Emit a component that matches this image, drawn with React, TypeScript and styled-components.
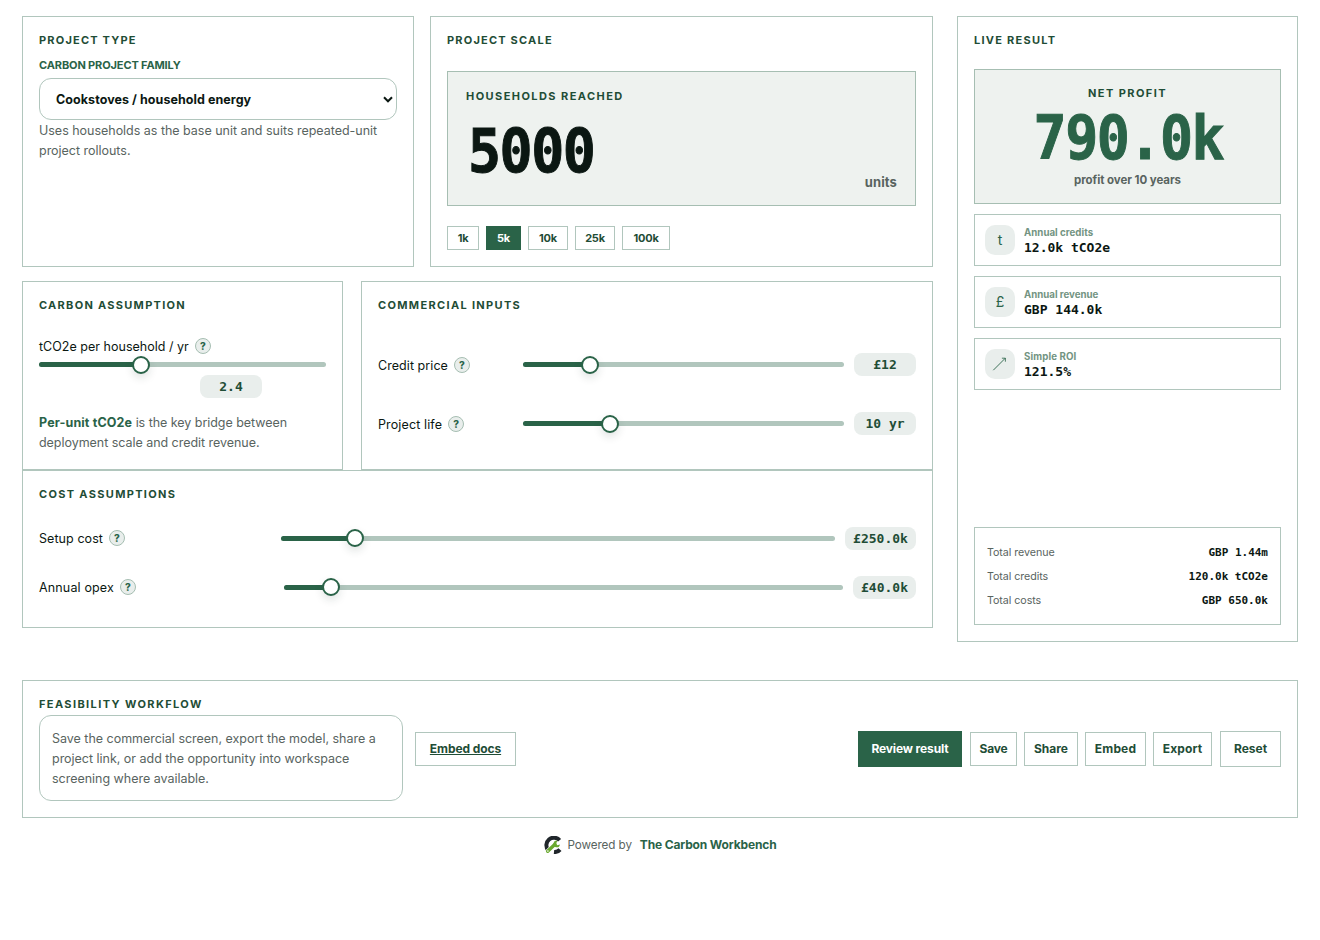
import React from 'react';
import styled, { createGlobalStyle, css } from 'styled-components';

const c = {
  ink: '#0b1712',
  green: '#2a6348',
  deep: '#1f4d36',
  muted: '#59645f',
  line: '#b1c6bd',
  lineStrong: '#a6beb2',
  tint: '#eef2ef',
  pill: '#e9eeec',
  sage: '#739482',
};

const mono = '"DejaVu Sans Mono", "Liberation Mono", monospace';

const GlobalStyle = createGlobalStyle`
  * { box-sizing: border-box; }
  body {
    margin: 0;
    background: #fff;
    color: ${c.ink};
    font-family: Inter, "Liberation Sans", sans-serif;
    font-size: 12.5px;
    line-height: 20px;
  }
  p { margin: 0; }
  button { font-family: inherit; }
`;

type Spaced = { $ls?: number };
const spacing = css<Spaced>`
  letter-spacing: ${({ $ls = 0 }) => $ls}px;
  white-space: nowrap;
`;

const Page = styled.main`
  display: flex;
  flex-direction: column;
  padding: 16px 22px;
`;

const Workbench = styled.div`
  display: grid;
  grid-template-columns: 911px 341px;
  column-gap: 24px;
  align-items: start;
`;

const Inputs = styled.div`
  display: flex;
  flex-direction: column;
`;

const TopRow = styled.div`
  display: grid;
  grid-template-columns: 392px 503px;
  gap: 16px;
  height: 251px;
  margin-bottom: 14px;
`;

const MiddleRow = styled.div`
  display: grid;
  grid-template-columns: 321px 572px;
  gap: 18px;
  height: 189px;
`;

const Card = styled.section<{ $height?: number }>`
  display: flex;
  flex-direction: column;
  border: 1px solid ${c.line};
  padding: 16px;
  min-width: 0;
  height: ${({ $height }) => ($height ? `${$height}px` : 'auto')};
`;

const Eyebrow = styled.h2<Spaced>`
  margin: 0;
  font-size: 11px;
  font-weight: 700;
  line-height: 14px;
  color: ${c.deep};
  ${spacing}
`;

const FieldLabel = styled.label`
  margin-top: 11px;
  font-size: 11px;
  font-weight: 700;
  line-height: 14px;
  letter-spacing: -0.13px;
  color: ${c.green};
`;

const SelectBox = styled.div`
  display: flex;
  align-items: center;
  justify-content: space-between;
  height: 42px;
  margin-top: 6px;
  padding: 1px 3px 0 16px;
  border: 1px solid ${c.line};
  border-radius: 12px;
  font-weight: 700;
  letter-spacing: 0.06px;
`;

const Copy = styled.p<Spaced>`
  padding-top: 1px;
  color: ${c.muted};
  ${spacing}
`;

const Strong = styled.strong`
  font-weight: 700;
  letter-spacing: 0.14px;
  color: ${c.green};
`;

const ScaleBox = styled.div`
  display: flex;
  flex-direction: column;
  height: 135px;
  margin-top: 24px;
  padding: 17px 18px 0;
  background: ${c.tint};
  border: 1px solid ${c.lineStrong};
`;

const BigNumber = styled.div<{ $color: string }>`
  font-family: ${mono};
  font-size: 61px;
  font-weight: 700;
  line-height: 60px;
  letter-spacing: -1.6px;
  white-space: nowrap;
  color: ${({ $color }) => $color};
  -webkit-text-stroke: 1px ${({ $color }) => $color};
  transform: scaleX(0.9);
`;

const ScaleNumber = styled(BigNumber)`
  align-self: flex-start;
  margin: 18px 0 0 2px;
  transform-origin: left;
`;

const Units = styled.span`
  align-self: flex-end;
  margin-top: -9px;
  font-size: 13px;
  font-weight: 700;
  letter-spacing: 0.1px;
  color: ${c.muted};
`;

const Chips = styled.div`
  display: flex;
  gap: 7px;
  margin-top: 20px;
`;

const Chip = styled.button<{ $width: number; $active?: boolean }>`
  width: ${({ $width }) => $width}px;
  height: 24px;
  padding: 0;
  font-size: 11px;
  font-weight: 700;
  letter-spacing: -0.2px;
  color: ${({ $active }) => ($active ? '#fff' : c.deep)};
  background: ${({ $active }) => ($active ? c.green : '#fff')};
  border: 1px solid ${({ $active }) => ($active ? c.green : c.line)};
`;

const ControlLabel = styled.div<Spaced & { $width?: number }>`
  display: flex;
  align-items: center;
  flex: none;
  gap: 6px;
  width: ${({ $width }) => ($width ? `${$width}px` : 'auto')};
  ${spacing}
`;

const LabelText = styled.span`
  padding-top: 1px;
  margin-bottom: -1px;
`;

const Help = styled.span`
  display: flex;
  align-items: center;
  justify-content: center;
  width: 16px;
  height: 16px;
  border: 1px solid ${c.lineStrong};
  border-radius: 50%;
  background: ${c.pill};
  font-size: 10px;
  font-weight: 800;
  line-height: 1;
  letter-spacing: 0;
  color: ${c.green};
`;

const Track = styled.div`
  position: relative;
  flex: 1;
  height: 5px;
  min-height: 5px;
  border-radius: 3px;
  background: ${c.line};
`;

const Fill = styled.div`
  height: 5px;
  border-radius: 3px 0 0 3px;
  background: ${c.green};
`;

const Thumb = styled.div<{ $raised?: boolean }>`
  position: absolute;
  top: ${({ $raised }) => ($raised ? -7 : -6)}px;
  width: 18px;
  height: 18px;
  margin-left: -9px;
  border: 2px solid ${c.green};
  border-radius: 50%;
  background: #fff;
  box-shadow: 0 4px 8px rgba(20, 50, 36, 0.13);
`;

const Pill = styled.output<{ $width: number }>`
  flex: none;
  width: ${({ $width }) => $width}px;
  height: 23px;
  border-radius: 8px;
  background: ${c.pill};
  font-family: ${mono};
  font-size: 13px;
  font-weight: 700;
  line-height: 24px;
  text-align: center;
  white-space: pre;
  color: ${c.deep};
`;

const ControlRow = styled.div<{ $top: number; $raised?: boolean }>`
  display: flex;
  align-items: center;
  gap: 10px;
  height: 23px;
  margin-top: ${({ $top }) => $top}px;

  & > ${ControlLabel} {
    padding-bottom: ${({ $raised }) => ($raised ? 2 : 0)}px;
  }
`;

const StackedControl = styled.div`
  display: flex;
  flex-direction: column;
  margin: 24px 0 14px;

  & > ${Track} {
    flex: none;
    margin: 6px 0 8px;
  }
  & > ${Pill} {
    margin-left: 161px;
  }
`;

const ResultBox = styled.div`
  display: flex;
  flex-direction: column;
  align-items: center;
  height: 135px;
  margin-top: 22px;
  padding-top: 16px;
  background: ${c.tint};
  border: 1px solid ${c.lineStrong};
`;

const ResultNumber = styled(BigNumber)`
  margin: 8px 0 0 2px;
`;

const ResultNote = styled.span`
  margin-top: 2px;
  font-size: 11.5px;
  font-weight: 700;
  letter-spacing: -0.06px;
  color: ${c.muted};
`;

const Metric = styled.div`
  display: flex;
  gap: 9px;
  height: 52px;
  margin-top: 10px;
  padding: 10px;
  border: 1px solid ${c.line};
`;

const MetricIcon = styled.span`
  display: flex;
  align-items: center;
  justify-content: center;
  width: 30px;
  height: 30px;
  border-radius: 10px;
  background: ${c.pill};
  font-size: 14px;
  color: ${c.green};
`;

const MetricText = styled.div`
  display: flex;
  flex-direction: column;
  padding-top: 1px;
`;

const MetricLabel = styled.span<Spaced>`
  font-size: 9.7px;
  font-weight: 700;
  line-height: 14px;
  color: ${c.sage};
  ${spacing}
`;

const MetricValue = styled.span`
  font-family: ${mono};
  font-size: 13px;
  font-weight: 700;
  line-height: 15px;
`;

const Totals = styled.dl`
  display: flex;
  flex-direction: column;
  height: 98px;
  margin: auto 0 0;
  padding: 12px;
  border: 1px solid ${c.line};
`;

const TotalRow = styled.div`
  display: flex;
  align-items: center;
  justify-content: space-between;
  height: 24px;
  font-size: 10.7px;
`;

const TotalName = styled.dt`
  padding-top: 1px;
  letter-spacing: -0.06px;
  color: ${c.muted};
`;

const TotalValue = styled.dd`
  margin: 0;
  padding-top: 1px;
  font-family: ${mono};
  font-size: 11px;
  font-weight: 700;
`;

const Workflow = styled(Card)`
  height: 138px;
  margin-top: 38px;
`;

const WorkflowRow = styled.div`
  display: flex;
  align-items: center;
  margin-top: 4px;
  height: 86px;
`;

const WorkflowNote = styled.div`
  width: 364px;
  height: 86px;
  padding: 12px;
  border: 1px solid ${c.line};
  border-radius: 12px;
  margin-top: -1px;
`;

const Actions = styled.div`
  display: flex;
  align-items: center;
  gap: 7px;
  margin-left: auto;
`;

const Action = styled.button<Spaced & { $width: number; $primary?: boolean; $tall?: boolean }>`
  display: flex;
  align-items: center;
  justify-content: center;
  width: ${({ $width }) => $width}px;
  height: ${({ $tall }) => ($tall ? 36 : 34)}px;
  margin: -18px 0 0;
  padding: 0 0 1px;
  font-size: 12px;
  font-weight: 700;
  color: ${({ $primary }) => ($primary ? '#fff' : c.deep)};
  background: ${({ $primary }) => ($primary ? c.green : '#fff')};
  border: 1px solid ${({ $primary }) => ($primary ? c.green : c.line)};
  ${({ $primary }) => $primary && 'margin-right: 1px;'}
  ${spacing}
`;

const ResetAction = styled(Action)`
  margin-left: 1px;
`;

const DocsLink = styled(Action)`
  margin-left: 12px;
  text-decoration: underline;
`;

const Footer = styled.footer`
  display: flex;
  align-items: center;
  justify-content: center;
  margin-top: 17px;
  font-size: 12px;
  color: ${c.muted};

  svg { margin-right: 6px; }
`;

const Powered = styled.span`
  margin-right: 8px;
  font-size: 11.7px;
  letter-spacing: -0.1px;
`;

const Brand = styled.strong`
  font-weight: 700;
  letter-spacing: -0.15px;
  color: ${c.green};
`;

function Slider({ value, raised }: { value: number; raised?: boolean }) {
  const at = `${value * 100}%`;
  return (
    <Track>
      <Fill style={{ width: at }} />
      <Thumb $raised={raised} style={{ left: at }} />
    </Track>
  );
}

type ControlProps = {
  label: string;
  labelWidth: number;
  value: number;
  text: string;
  pill: number;
  top: number;
  ls?: number;
  raised?: boolean;
};

function Control({ label, labelWidth, value, text, pill, top, ls, raised }: ControlProps) {
  return (
    <ControlRow $top={top} $raised={raised}>
      <ControlLabel $width={labelWidth} $ls={ls}>
        <LabelText>{label}</LabelText>
        <Help>?</Help>
      </ControlLabel>
      <Slider value={value} raised={raised} />
      <Pill $width={pill}>{text}</Pill>
    </ControlRow>
  );
}

const ArrowIcon = () => (
  <svg width="16" height="16" viewBox="0 0 16 16" fill="none" stroke="currentColor" strokeWidth="0.9">
    <path d="M1.3 14.2 13.4 2.1" />
    <path d="M9.9 2.2h3.5v3.5" strokeWidth="0.8" />
  </svg>
);

const Logo = () => (
  <svg width="18" height="18" viewBox="0 0 18 18" fill="none">
    <path d="M15.6 4.3A7 7 0 1 0 4.2 14.1M10 16a7 7 0 0 0 6-2.4" stroke="#20262b" strokeWidth="4" />
    <path d="M3.4 15.6 11.6 7.6" stroke="#fff" strokeWidth="4.6" />
    <path d="M3.7 15.2 11 8.2" stroke="#6aa92f" strokeWidth="3.4" strokeLinecap="round" />
    <path d="M13.6 4.8a3.3 3.3 0 1 0 2.3 3.6l-2.5.8-1.5-1.5z" fill="#6aa92f" />
    <circle cx="3.9" cy="15.1" r="0.8" fill="#fff" />
  </svg>
);

const chips: [string, number][] = [['1k', 32], ['5k', 35], ['10k', 40], ['25k', 40], ['100k', 48]];

const metrics: { icon: React.ReactNode; label: string; value: string; ls: number }[] = [
  { icon: 't', label: 'Annual credits', value: '12.0k tCO2e', ls: 0.03 },
  { icon: '£', label: 'Annual revenue', value: 'GBP 144.0k', ls: -0.01 },
  { icon: <ArrowIcon />, label: 'Simple ROI', value: '121.5%', ls: 0.13 },
];

const totals = [
  ['Total revenue', 'GBP 1.44m'],
  ['Total credits', '120.0k tCO2e'],
  ['Total costs', 'GBP 650.0k'],
];

export default function App() {
  return (
    <Page>
      <GlobalStyle />
      <Workbench>
        <Inputs>
          <TopRow>
            <Card>
              <Eyebrow $ls={1.2}>PROJECT TYPE</Eyebrow>
              <FieldLabel>CARBON PROJECT FAMILY</FieldLabel>
              <SelectBox>
                Cookstoves / household energy
                <svg width="10" height="8" viewBox="0 0 10 8" fill="none" stroke="#0b1712" strokeWidth="2">
                  <path d="M1 1.3 5 5.3 9 1.3" />
                </svg>
              </SelectBox>
              <Copy $ls={-0.02}>Uses households as the base unit and suits repeated-unit<br />project rollouts.</Copy>
            </Card>
            <Card>
              <Eyebrow $ls={1.2}>PROJECT SCALE</Eyebrow>
              <ScaleBox>
                <Eyebrow $ls={1.43}>HOUSEHOLDS REACHED</Eyebrow>
                <ScaleNumber $color={c.ink}>5000</ScaleNumber>
                <Units>units</Units>
              </ScaleBox>
              <Chips>
                {chips.map(([name, width]) => (
                  <Chip key={name} $width={width} $active={name === '5k'}>{name}</Chip>
                ))}
              </Chips>
            </Card>
          </TopRow>
          <MiddleRow>
            <Card>
              <Eyebrow $ls={1.28}>CARBON ASSUMPTION</Eyebrow>
              <StackedControl>
                <ControlLabel $ls={0.02}>
                  <LabelText>tCO2e per household / yr</LabelText>
                  <Help>?</Help>
                </ControlLabel>
                <Slider value={0.355} />
                <Pill $width={62}>2.4</Pill>
              </StackedControl>
              <Copy $ls={-0.04}><Strong>Per-unit tCO2e</Strong> is the key bridge between<br />deployment scale and credit revenue.</Copy>
            </Card>
            <Card>
              <Eyebrow $ls={1.33}>COMMERCIAL INPUTS</Eyebrow>
              <Control label="Credit price" labelWidth={135} value={0.209} text="£12" pill={62} top={41} ls={0.06} />
              <Control label="Project life" labelWidth={135} value={0.271} text="10 yr" pill={62} top={36} ls={0.12} />
            </Card>
          </MiddleRow>
          <Card $height={158}>
            <Eyebrow $ls={1.32}>COST ASSUMPTIONS</Eyebrow>
            <Control label="Setup cost" labelWidth={232} value={0.1336} text="£250.0k" pill={71} top={26} ls={0.07} raised />
            <Control label="Annual opex" labelWidth={235} value={0.0841} text="£40.0k" pill={63} top={26} ls={0.15} raised />
          </Card>
        </Inputs>
        <Card $height={626}>
          <Eyebrow $ls={1.25}>LIVE RESULT</Eyebrow>
          <ResultBox>
            <Eyebrow $ls={1.42}>NET PROFIT</Eyebrow>
            <ResultNumber $color={c.green}>790.0k</ResultNumber>
            <ResultNote>profit over 10 years</ResultNote>
          </ResultBox>
          {metrics.map((m) => (
            <Metric key={m.label}>
              <MetricIcon>{m.icon}</MetricIcon>
              <MetricText>
                <MetricLabel $ls={m.ls}>{m.label}</MetricLabel>
                <MetricValue>{m.value}</MetricValue>
              </MetricText>
            </Metric>
          ))}
          <Totals>
            {totals.map(([name, value]) => (
              <TotalRow key={name}>
                <TotalName>{name}</TotalName>
                <TotalValue>{value}</TotalValue>
              </TotalRow>
            ))}
          </Totals>
        </Card>
      </Workbench>
      <Workflow>
        <Eyebrow $ls={1.39}>FEASIBILITY WORKFLOW</Eyebrow>
        <WorkflowRow>
          <WorkflowNote>
            <Copy $ls={-0.02}>Save the commercial screen, export the model, share a<br />project link, or add the opportunity into workspace<br />screening where available.</Copy>
          </WorkflowNote>
          <DocsLink as="a" $width={101} $ls={-0.08}>Embed docs</DocsLink>
          <Actions>
            <Action $width={104} $primary $tall $ls={-0.13}>Review result</Action>
            <Action $width={47} $ls={-0.2}>Save</Action>
            <Action $width={54}>Share</Action>
            <Action $width={61} $ls={0.15}>Embed</Action>
            <Action $width={59} $ls={0.15}>Export</Action>
            <ResetAction $width={61} $tall>Reset</ResetAction>
          </Actions>
        </WorkflowRow>
      </Workflow>
      <Footer>
        <Logo />
        <Powered>Powered by</Powered>
        <Brand>The Carbon Workbench</Brand>
      </Footer>
    </Page>
  );
}
